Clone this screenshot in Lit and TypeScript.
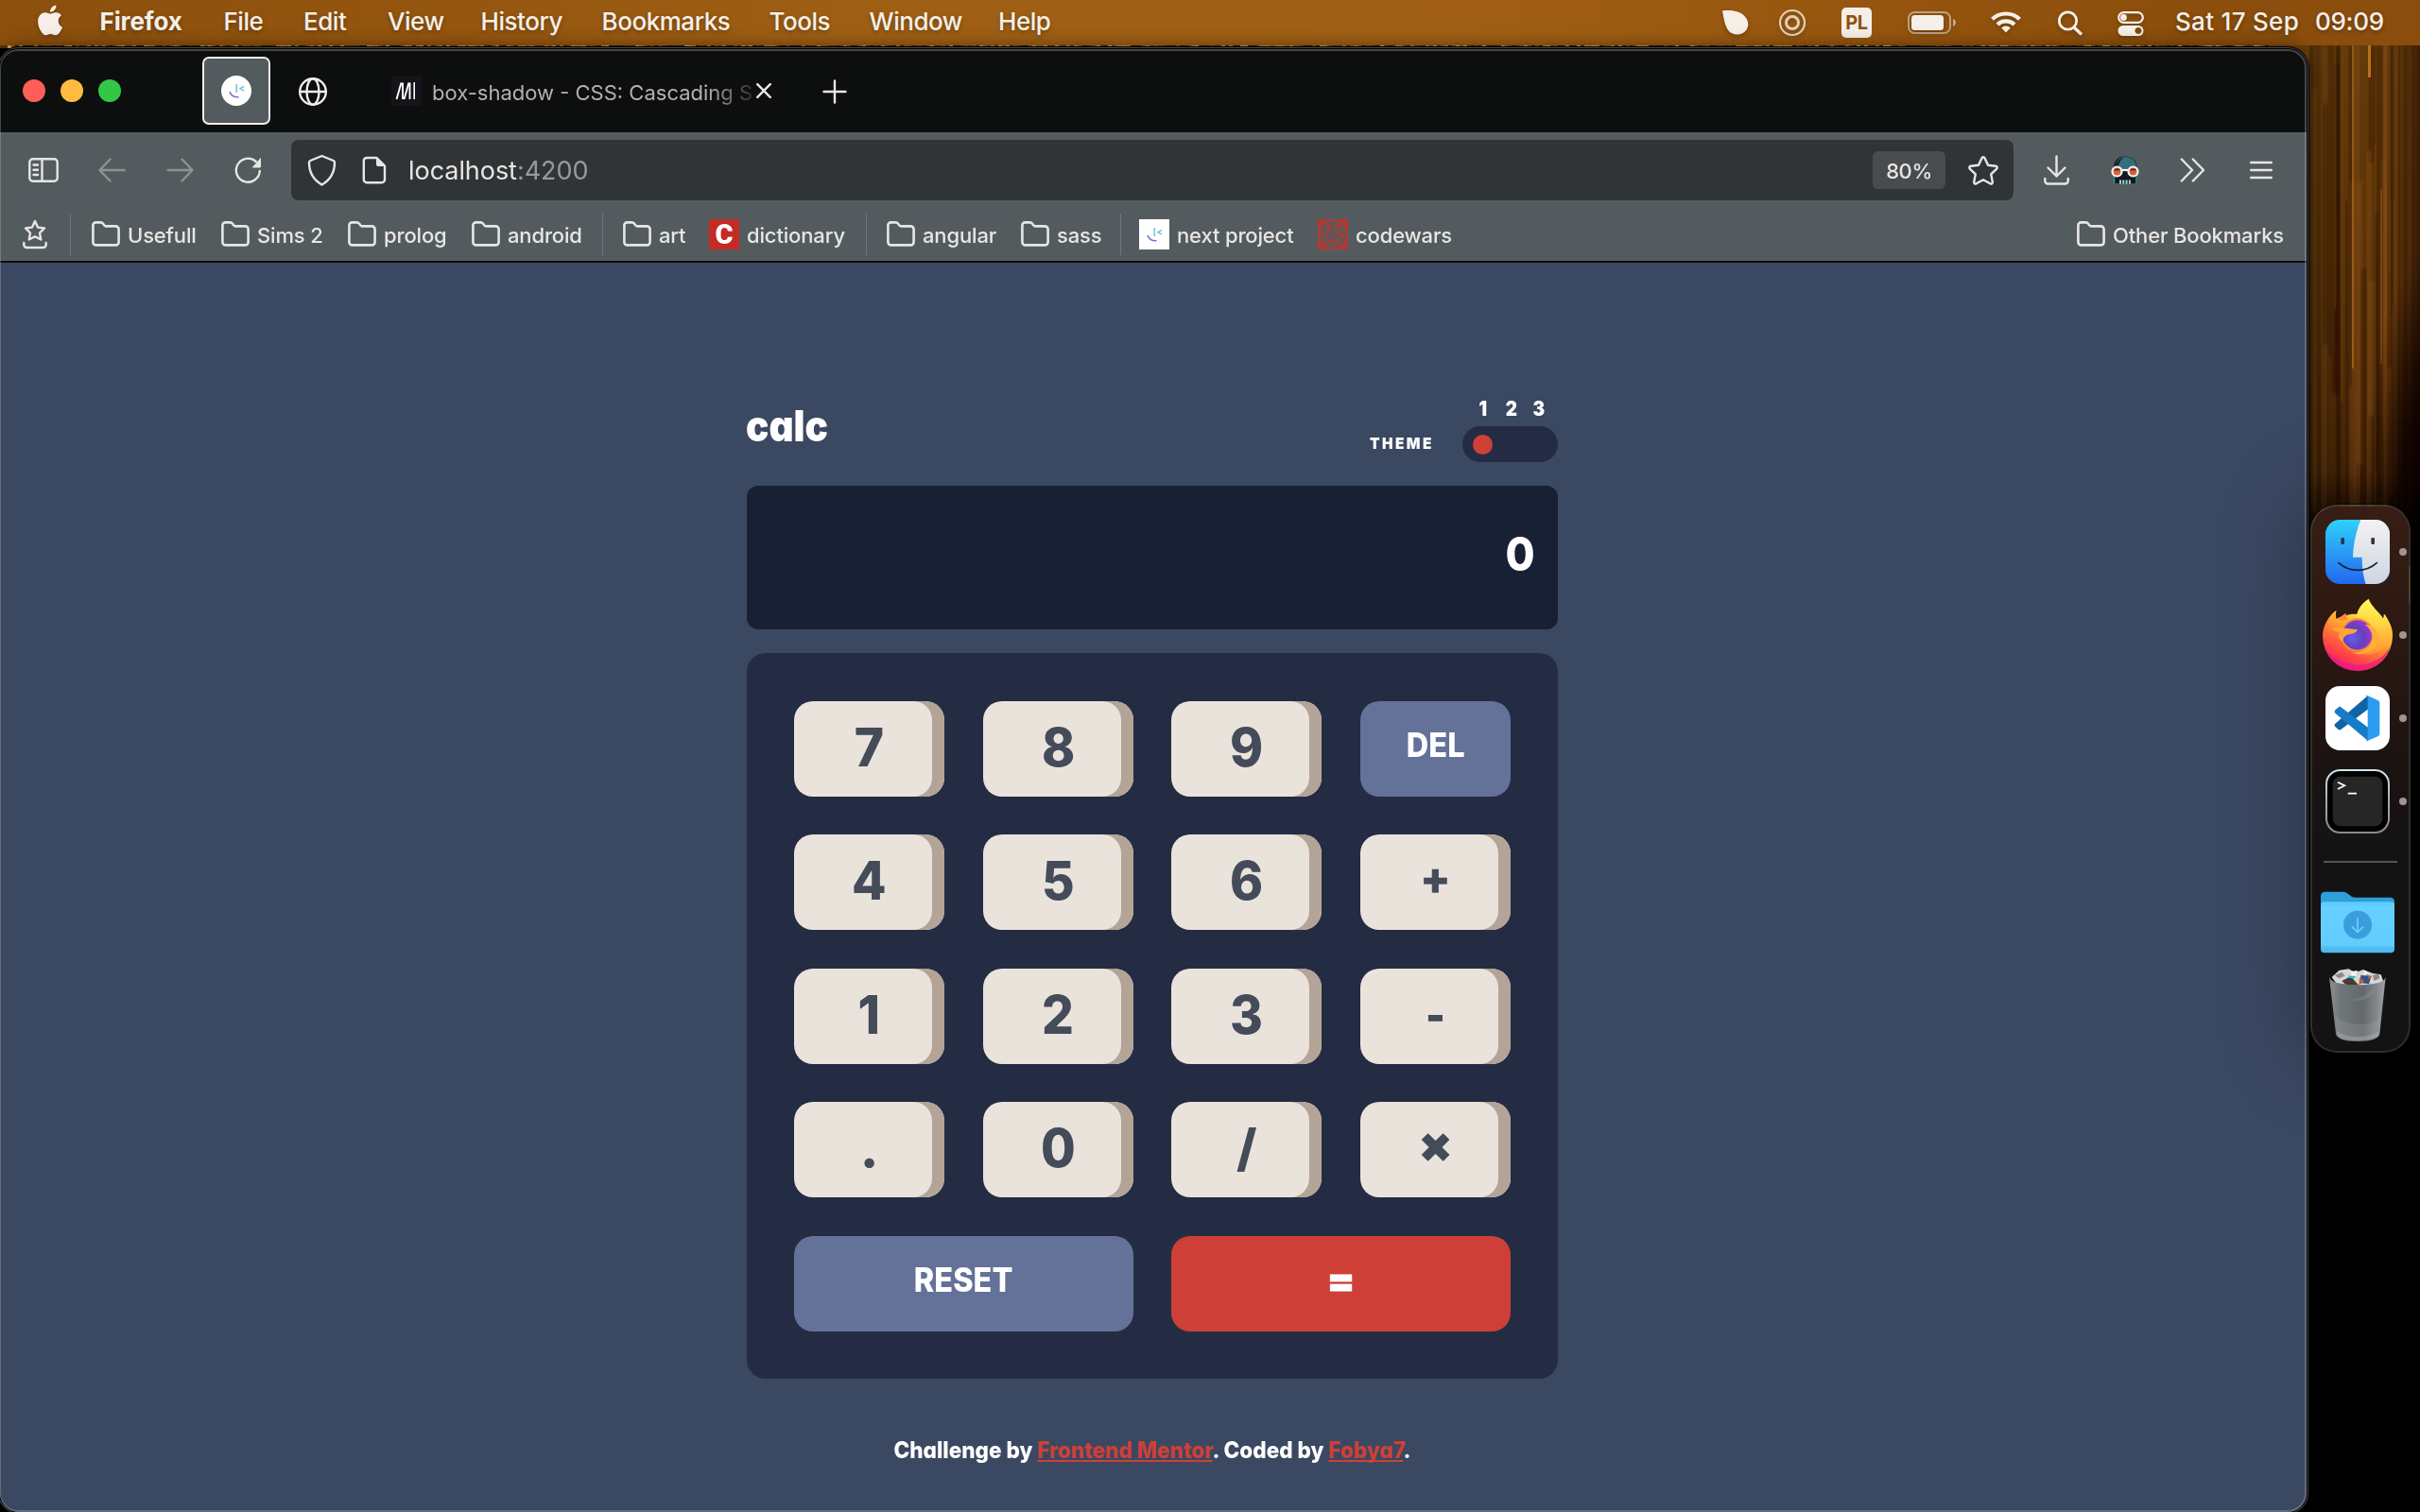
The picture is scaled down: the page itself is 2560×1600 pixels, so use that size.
import { LitElement, html, css, svg } from "lit";
import { customElement } from "lit/decorators.js";
import { classMap } from "lit/directives/class-map.js";

const folder = html`<svg class="folder" width="30" height="27" viewBox="0 0 30 27">
  <path d="M1.4 4.6a3 3 0 0 1 3-3.2h5.2c1 0 1.700.4 2.300 1.100l1.500 2c.5.6 1 .9 1.800.9h10a3.200 3.200 0 0 1 3.400 3.200v13.600a3.200 3.200 0 0 1-3.200 3.200H4.600a3.200 3.200 0 0 1-3.200-3.200z"/></svg>`;

const smile = svg`<path d="M9 17c1.200 4 4.500 6 9.500 5.800" stroke="#6a78c8" stroke-width="1.500" fill="none"/>
  <path d="M16.200 9v9" stroke="#6fc4dc" stroke-width="1.500"/>
  <path d="M24 11.500l-4 2.200 4 2.400" stroke="#6fc4dc" stroke-width="1.500" fill="none"/>`;

const rand = (i: number) => {
  const v = Math.sin(i * 127.1 + 11.7) * 43758.5453;
  return v - Math.floor(v);
};

@customElement("desktop-wallpaper")
class DesktopWallpaper extends LitElement {
  static styles = css`
    :host { display: block; width: 2560px; height: 1600px; background: #000; }
    svg { display: block; }
  `;
  render() {
    const tints = ["#8a5410", "#c98a2c", "#3a1d04", "#d8a850", "#5e3407", "#241002"];
    const fleck = Array.from({ length: 610 }, (_, i) =>
      svg`<rect x=${i * 4} y="48" width="4" height="3" fill=${tints[Math.floor(rand(i) * 6)]}/>`);
    const streaks = Array.from({ length: 40 }, (_, i) => {
      const x = 2443 + rand(i + 900) * 112;
      const y = rand(i + 50) > 0.35 ? 48 : 48 + rand(i + 70) * 240;
      const light = rand(i + 300) > 0.4;
      return svg`<rect x=${x} y=${y} width=${1.5 + rand(i + 500) * 6} height=${220 + rand(i + 200) * 380}
        fill=${light ? "#9a5a16" : "#1c0c00"} opacity=${light ? 0.26 : 0.24}/>`;
    });
    return html`<svg width="2560" height="1600" viewBox="0 0 2560 1600">
      <defs>
        <filter id="soft"><feGaussianBlur stdDeviation=".7 1.5"/></filter>
        <linearGradient id="v" x1="0" y1="0" x2="0" y2="1">
          <stop offset="0" stop-color="#6b3f0b"/><stop offset=".45" stop-color="#5c3409"/>
          <stop offset=".8" stop-color="#4a2807"/><stop offset="1" stop-color="#2e1603"/>
        </linearGradient>
        <linearGradient id="h" x1="0" y1="0" x2="1" y2="0">
          <stop offset="0" stop-color="#000" stop-opacity=".3"/><stop offset=".25" stop-color="#000" stop-opacity=".05"/>
          <stop offset=".7" stop-color="#000" stop-opacity=".05"/><stop offset="1" stop-color="#180400" stop-opacity=".55"/>
        </linearGradient>
        <linearGradient id="f" x1="0" y1="0" x2="0" y2="1">
          <stop offset="0" stop-color="#000" stop-opacity="0"/><stop offset="1" stop-color="#000"/>
        </linearGradient>
        <radialGradient id="c" gradientUnits="userSpaceOnUse" cx="0" cy="0" r="1" gradientTransform="translate(2575 560) scale(75 300)">
          <stop offset="0" stop-color="#060000"/><stop offset=".5" stop-color="#0a0000" stop-opacity=".8"/><stop offset="1" stop-color="#100200" stop-opacity="0"/>
        </radialGradient>
      </defs>
      ${fleck}
      <rect x="2400" y="48" width="160" height="552" fill="url(#v)"/>
      <g filter="url(#soft)">${streaks}</g>
      <rect x="2488" y="48" width="2" height="342" fill="#b9701f" opacity=".7"/>
      <rect x="2505" y="48" width="3" height="34" fill="#cf7c22" opacity=".9"/>
      <rect x="2518" y="200" width="2" height="185" fill="#95561a" opacity=".6"/>
      <rect x="2533" y="60" width="3" height="450" fill="#7d4711" opacity=".5"/>
      <rect x="2443" y="48" width="117" height="552" fill="url(#h)"/>
      <rect x="2443" y="48" width="117" height="552" fill="url(#c)"/>
      <rect x="2443" y="500" width="117" height="100" fill="url(#f)"/>
    </svg>`;
  }
}

@customElement("menu-bar")
class MenuBar extends LitElement {
  static styles = css`
    :host { display: block; }
    .bar {
      display: flex; height: 48px; color: #f5efe8; font: 500 26px/45px Inter, "Liberation Sans", sans-serif;
      background: linear-gradient(90deg, #8c4f0d 0, #95560f 20%, #9e5f14 35%, #a05f14 60%, #98570f 75%, #8b4e0c 90%, #8a4d0d);
      text-shadow: 0 2px 4px rgba(0, 0, 0, .3); white-space: nowrap; letter-spacing: -.45px;
    }
    .menus { display: grid; grid-template-columns: 66px 131px 84.5px 89px 98.5px 128px 177px 106px 136.500px 80px; padding-left: 39.500px; }
    .app { font-weight: 700; letter-spacing: -.1px; }
    .status { display: grid; margin-left: auto; width: 742px; grid-template-columns: 64px 66px 70px 88px 71px 63px 61px 148px auto; }
    svg { display: block; filter: drop-shadow(0 2px 2px rgba(0, 0, 0, .25)); }
    .day { letter-spacing: .3px; }
    .time { letter-spacing: -.3px; }
    .lang { display: block; margin-top: 8px; width: 32px; height: 32px; border-radius: 5px; background: #f5efe8; color: #8f520e; font: 700 20px/32px Inter, sans-serif; text-align: center; text-shadow: none; letter-spacing: -.5px; }
  `;
  render() {
    return html`<div class="bar">
      <div class="menus">
        <svg width="30" height="48" viewBox="0 0 30 48"><path transform="translate(-2.800 5.500) scale(1.320)" fill="#f5efe8" d="M12.152 6.896c-.948 0-2.415-1.078-3.960-1.040-2.040.027-3.910 1.183-4.961 3.014-2.117 3.675-.546 9.103 1.519 12.090 1.013 1.454 2.208 3.090 3.792 3.039 1.520-.065 2.090-.987 3.935-.987 1.831 0 2.350.987 3.960.948 1.637-.026 2.676-1.480 3.676-2.948 1.156-1.688 1.636-3.325 1.662-3.415-.039-.013-3.182-1.221-3.220-4.857-.026-3.040 2.480-4.494 2.597-4.559-1.429-2.090-3.623-2.324-4.390-2.376-2-.156-3.675 1.090-4.610 1.090zM15.530 3.830c.843-1.012 1.400-2.427 1.245-3.830-1.207.052-2.662.805-3.532 1.818-.780.896-1.454 2.338-1.273 3.714 1.338.104 2.715-.688 3.559-1.701"/></svg>
        <span class="app">Firefox</span>
        ${["File", "Edit", "View", "History", "Bookmarks", "Tools", "Window", "Help"].map((m) => html`<span>${m}</span>`)}
      </div>
      <div class="status">
        <svg width="34" height="48" viewBox="0 0 34 48"><path fill="#f5efe8" d="M4 11.500C12 10.500 21 11 27 16.500c6 6 5.500 14-.5 18-5 3.200-12 2.500-15.500-1.500C6.500 28 5.500 19 4 11.500z"/></svg>
        <svg width="30" height="48" viewBox="0 0 30 48" fill="none" stroke="#f5efe8"><g opacity=".8"><circle cx="14" cy="24" r="13" stroke-width="2.200"/><circle cx="14" cy="24" r="6.500" stroke-width="3"/></g></svg>
        <span class="lang">PL</span>
        <svg width="54" height="48" viewBox="0 0 54 48"><rect x="1" y="13" width="44" height="22" rx="6.500" fill="none" stroke="#f5efe8" stroke-width="2" opacity=".5"/><rect x="4" y="16" width="34" height="16" rx="3.500" fill="#f5efe8"/><path d="M48 20v8c2-.6 3-2.200 3-4s-1-3.400-3-4z" fill="#f5efe8" opacity=".55"/></svg>
        <svg width="34" height="48" viewBox="0 0 34 48" fill="none" stroke="#f5efe8" stroke-width="4.200"><path d="M1.500 20.300a21 21 0 0 1 29 0"/><path d="M7 26a13 13 0 0 1 18 0"/><path d="M16 34.500l-4.800-5a7 7 0 0 1 9.600 0z" fill="#f5efe8" stroke="none"/></svg>
        <svg width="30" height="48" viewBox="0 0 30 48" fill="none" stroke="#f5efe8" stroke-width="2.800"><circle cx="10.500" cy="22" r="9.200"/><path d="M17 29l8 7.500" stroke-width="3.400"/></svg>
        <svg width="30" height="48" viewBox="0 0 30 48"><rect x="1.200" y="13.200" width="25.600" height="10.600" rx="5.300" fill="none" stroke="#f5efe8" stroke-width="2.200"/><circle cx="6.500" cy="18.500" r="3.400" fill="#f5efe8"/><path fill="#f5efe8" fill-rule="evenodd" d="M6 27h16a5.500 5.500 0 0 1 0 11H6a5.500 5.500 0 0 1 0-11zm16 2a3.500 3.500 0 1 0 .01 0z"/></svg>
        <span class="day">Sat 17 Sep</span><span class="time">09:09</span>
      </div>
    </div>`;
  }
}

@customElement("browser-chrome")
class BrowserChrome extends LitElement {
  static styles = css`
    :host { display: block; font-family: Inter, "Liberation Sans", sans-serif; color: #e8e6e3; white-space: nowrap; }
    svg { display: block; flex: none; }
    .tabs { display: flex; align-items: center; height: 88px; background: #0d0f0e; padding-left: 24px; }
    .lights { display: flex; gap: 16px; margin-right: 86px; }
    .light { width: 24px; height: 24px; border-radius: 50%; }
    .close { background: #ff5f57; } .min { background: #febb3f; } .max { background: #33c748; }
    .pinned { box-sizing: border-box; width: 72px; height: 72px; border: 2px solid #f0eeeb; border-radius: 7px; background: #535b5e; display: grid; place-items: center; margin-right: 29px; }
    .globe { margin: 2px 67px 0 0; }
    .mdn { margin-right: 11px; }
    .title { width: 342px; height: 36px; font-size: 22px; line-height: 40px; color: #b3b1ae; overflow: hidden; -webkit-mask: linear-gradient(90deg, #000 85%, rgba(0, 0, 0, .15)); mask: linear-gradient(90deg, #000 85%, rgba(0, 0, 0, .15)); }
    .x { margin-left: 1px; } .plus { margin: 2px 0 0 54px; }
    .tools { display: grid; align-items: center; height: 80px; background: #535b5e; padding-left: 30px; grid-template-columns: 74px 72px 72px 60px 1854px 70px 74px 74px auto; }
    .line { fill: none; stroke: #e8e6e3; stroke-width: 2.400; stroke-linecap: round; stroke-linejoin: round; }
    .dim { opacity: .4; }
    .url { width: 1822px; height: 64px; border-radius: 8px; background: #313436; display: flex; align-items: center; box-sizing: border-box; padding-left: 17px; }
    .doc { margin: 0 22px 0 27px; }
    .host { font-size: 27px; line-height: 66px; letter-spacing: -.05px; padding: 2px 0 0 1px; }
    .port { color: #98999a; }
    .zoom { margin-left: auto; width: 77px; height: 40px; border-radius: 6px; background: #494c4f; font-size: 22px; font-weight: 500; line-height: 43px; text-align: center; letter-spacing: -.4px; }
    .fav { margin: 0 15px 0 23px; }
    .marks { display: grid; align-items: center; height: 56px; background: #535b5e; padding-left: 24px; border-bottom: 2px solid #0c0d0d; grid-template-columns: 50px 23px 137px 134px 131px 137.500px 22.500px 91px 165.500px 22.500px 142px 104.500px 20.500px 189px 803px auto; }
    .sep { width: 1px; height: 44px; background: #70777a; }
    .mark { display: flex; align-items: center; gap: 8px; font-size: 22px; font-weight: 500; line-height: 28px; letter-spacing: -.15px; }
    .mark span { padding-top: 2px; }
    .folder { fill: none; stroke: #e8e6e3; stroke-width: 2.600; margin-top: -2px; }
    .c { width: 32px; height: 32px; background: #c42b24; color: #fff; font: 900 29px/32px Roboto, sans-serif; text-align: center; }
    .mark .c { padding: 0; }
  `;
  private mark(label: string, icon = folder) {
    return html`<div class="mark">${icon}<span>${label}</span></div>`;
  }
  render() {
    const sep = html`<div class="sep"></div>`;
    const next = html`<svg width="32" height="32" viewBox="0 0 32 32"><rect width="32" height="32" fill="#fff"/>${smile}</svg>`;
    const blades = [0, 60, 120, 180, 240, 300].map((a) =>
      svg`<path transform=${`rotate(${a} 16 16)`} d="M16 13.500c-1.500-3.500.5-8 5.500-9.300M13.500 12.500c-1-3.500 1-7.500 4.500-9.300"/>`);
    const wars = html`<svg width="32" height="32" viewBox="0 0 32 32"><rect width="32" height="32" fill="#ad3b33"/><g fill="none" stroke="#535b5e" stroke-width="1.800"><circle cx="16" cy="16" r="12.800"/>${blades}<circle cx="16" cy="16" r="2.500"/></g></svg>`;
    return html`
      <div class="tabs">
        <div class="lights"><div class="light close"></div><div class="light min"></div><div class="light max"></div></div>
        <div class="pinned"><svg width="32" height="32" viewBox="0 0 32 32"><circle cx="16" cy="16" r="16" fill="#fff"/>${smile}</svg></div>
        <svg class="globe" width="32" height="32" viewBox="0 0 32 32" fill="none" stroke="#f0eeeb" stroke-width="2.400"><circle cx="16" cy="16" r="13.800"/><ellipse cx="16" cy="16" rx="6.500" ry="13.800"/><path d="M2.500 16h27"/></svg>
        <svg class="mdn" width="32" height="32" viewBox="0 0 32 32"><rect width="32" height="32" fill="#15141a"/><path d="M5.500 25l5-17.500M12 7.500V25M13.500 25l5-17.500M19.500 7.500V25" stroke="#fff" stroke-width="1.900" fill="none"/><path d="M24.200 7v18" stroke="#fff" stroke-width="1.600"/></svg>
        <div class="title">box-shadow - CSS: Cascading S</div>
        <svg class="x" width="16" height="16" viewBox="0 0 16 16"><path class="line" stroke-width="2" d="M1.200 1.200l13.600 13.600M14.800 1.200L1.200 14.800"/></svg>
        <svg class="plus" width="26" height="26" viewBox="0 0 26 26"><path class="line" d="M13 1.500v23M1.500 13h23"/></svg>
      </div>
      <div class="tools">
        <svg width="32" height="26" viewBox="0 0 32 26"><g class="line"><rect x="1.300" y="1.300" width="29.400" height="23.400" rx="3.500"/><path d="M14.500 1.500v23M5.500 7.500h4.500M5.500 12.700h4.500M5.500 18h4.500"/></g></svg>
        <svg class="dim" width="29" height="26" viewBox="0 0 29 26"><path class="line" d="M12.500 1.500L1.500 13l11 11.500M1.500 13h26"/></svg>
        <svg class="dim" width="29" height="26" viewBox="0 0 29 26"><path class="line" d="M16.500 1.500L27.500 13l-11 11.500M27.500 13h-26"/></svg>
        <svg width="30" height="30" viewBox="0 0 30 30"><path class="line" stroke-width="2.600" d="M26.800 16a12.500 12.500 0 1 1-4-10"/><path fill="#e8e6e3" d="M28 1.800v9.700a1 1 0 0 1-1 1h-8.500z"/></svg>
        <div class="url">
          <svg width="31" height="34" viewBox="0 0 31 34"><path class="line" d="M15.500 2l12.200 5c.9.4 1.300 1 1.300 2 0 10.500-4 18-13.500 23.500C6 27 2 19.500 2 9c0-1 .4-1.600 1.300-2z"/></svg>
          <svg class="doc" width="26" height="30" viewBox="0 0 26 30"><path class="line" d="M5 2h10.500l8.500 8.500V25a3.200 3.200 0 0 1-3.200 3.200H5A3.200 3.200 0 0 1 1.800 25V5.200A3.200 3.200 0 0 1 5 2z"/><path d="M15 2v7a2 2 0 0 0 2 2h7z" fill="#e8e6e3"/></svg>
          <div class="host">localhost<span class="port">:4200</span></div>
          <div class="zoom">80%</div>
          <svg class="fav" width="34" height="34" viewBox="0 0 34 34"><path class="line" d="M17 3.200c.7 0 1.200.4 1.500 1l3.500 7.600 8.200 1c1.500.2 2 1.700 1 2.800l-6 5.700 1.600 8.300c.2 1.400-1.100 2.300-2.400 1.700L17 27.200l-7.400 4.100c-1.300.6-2.600-.3-2.400-1.700l1.600-8.300-6-5.700c-1-1.100-.5-2.600 1-2.800l8.200-1 3.500-7.600c.3-.6.8-1 1.500-1z"/></svg>
        </div>
        <svg width="28" height="32" viewBox="0 0 28 32"><g class="line"><path d="M13.500 1.500v21M4.500 13.500l9 9 9-9M1.300 25v2.500a3 3 0 0 0 3 3h18.400a3 3 0 0 0 3-3V25"/></g></svg>
        <svg width="32" height="32" viewBox="0 0 32 32"><path d="M4 30V13C4 6 9 1.500 16 1.500S28.500 6 28.500 13v17z" fill="#15191f"/><path d="M5 14C6 6 10.500 2 16.500 2c6.500 0 11.500 4.500 11.500 11v3H8c0-5 2-9.500 6-13C9 5 6 9 5 14z" fill="#336e7d"/><path d="M4.500 20v10M28 20v10" stroke="#2a93a5" stroke-width="1.500"/><path d="M10 28.500h13" stroke="#9fd8e2" stroke-width="4" stroke-dasharray="2 1.300"/><g fill="#d9603f" stroke="#fff3ee" stroke-width="2.200"><circle cx="7.500" cy="17.500" r="5"/><circle cx="24.500" cy="17.500" r="5"/><path d="M12 16h8" fill="none"/></g><path d="M4 16.500a3.800 3.800 0 0 1 7 0zM21 16.500a3.800 3.800 0 0 1 7 0z" fill="#54302c"/></svg>
        <svg width="26" height="26" viewBox="0 0 26 26"><path class="line" d="M1.800 1.500L13 13 1.800 24.500M13.800 1.500L25 13 13.800 24.500"/></svg>
        <svg width="24" height="20" viewBox="0 0 24 20"><path class="line" d="M1.200 2h21.600M1.200 10h21.600M1.200 18h21.600"/></svg>
      </div>
      <div class="marks">
        <svg width="26" height="32" viewBox="0 0 26 32"><g class="line"><path d="M13 2l3 6.600 7 .9-5 5 1.200 7L13 18.300l-6.200 3.200L8 14.500l-5-5 7-.9z"/><path d="M1.300 25v2a3 3 0 0 0 3 3h17.400a3 3 0 0 0 3-3v-2"/></g></svg>
        ${sep}${["Usefull", "Sims 2", "prolog", "android"].map((t) => this.mark(t))}
        ${sep}${this.mark("art")}${this.mark("dictionary", html`<span class="c">C</span>`)}
        ${sep}${this.mark("angular")}${this.mark("sass")}
        ${sep}${this.mark("next project", next)}${this.mark("codewars", wars)}
        ${this.mark("Other Bookmarks")}
      </div>`;
  }
}

interface Key { label: string; kind: string; }
const KEYS: Key[] = [
  ...["7", "8", "9"].map((label) => ({ label, kind: "num" })), { label: "DEL", kind: "word" },
  ...["4", "5", "6"].map((label) => ({ label, kind: "num" })), { label: "+", kind: "plus" },
  ...["1", "2", "3"].map((label) => ({ label, kind: "num" })), { label: "-", kind: "minus" },
  { label: ".", kind: "dot" }, { label: "0", kind: "num" }, { label: "/", kind: "slash" }, { label: "×", kind: "times" },
  { label: "RESET", kind: "word wide" }, { label: "=", kind: "equals wide" },
];

@customElement("calc-page")
class CalcPage extends LitElement {
  static styles = css`
    :host { display: block; background: #3b4862; color: #fff; font-family: Inter, "Liberation Sans", sans-serif; font-feature-settings: "cv11"; }
    .page { width: 858px; margin-left: 790px; padding-top: 140px; }
    header { display: flex; height: 71px; margin-bottom: 25px; }
    .logo { font-size: 45px; font-weight: 900; line-height: 44px; margin-top: 11px; margin-left: -1px; transform: scaleX(.9); transform-origin: 0 50%; width: 93px; }
    .theme { margin: 31px 30px 0 auto; font-size: 16.500px; line-height: 40px; font-weight: 900; letter-spacing: 2.600px; transform: scaleX(.93); transform-origin: 100% 50%; }
    .nums { display: grid; grid-template-columns: repeat(3, 29.500px); padding-left: 7px; font-size: 21px; font-weight: 900; line-height: 29px; text-align: center; }
    .nums span { transform: scaleX(.9); }
    .toggle { box-sizing: border-box; margin-top: 4px; width: 101px; height: 38px; border-radius: 19px; background: #242c44; padding: 9px 11px 0; }
    .knob { width: 21px; height: 21px; border-radius: 50%; background: #ce4037; }
    .display { box-sizing: border-box; height: 152px; border-radius: 12px; background: #182034; padding-right: 24px; text-align: right; font-size: 50px; font-weight: 800; line-height: 144px; }
    .display span { display: inline-block; transform: scaleX(.9); transform-origin: 100% 50%; }
    .pad { margin-top: 25px; height: 768px; box-sizing: border-box; padding: 50.900px 50px 50px; border-radius: 20px; background: #242c44; display: grid; grid-template-columns: repeat(4, 159px); justify-content: space-between; grid-template-rows: repeat(5, 101px); row-gap: 40.500px; }
    .key { border-radius: 20px; background: #eae3dc; color: #444b59; box-shadow: inset -13px 0 #b3a497; text-align: center; font-size: 56px; font-weight: 800; line-height: 98px; overflow: hidden; }
    .key span { display: inline-block; }
    .num span { transform: scaleX(.95); }
    .wide { grid-column: span 2; }
    .word, .equals { color: #fff; box-shadow: none; }
    .word { background: #647198; font-size: 35.500px; line-height: 94px; }
    .word span { transform: scaleX(.915); }
    .equals { background: #ce4037; font-size: 42px; font-weight: 900; line-height: 94px; -webkit-text-stroke: 1.200px #fff; }
    .plus { font-size: 47px; line-height: 92px; -webkit-text-stroke: .6px #444b59; }
    .minus { font-size: 40px; line-height: 100px; -webkit-text-stroke: 1.600px #444b59; }
    .times { font-size: 50px; font-weight: 900; line-height: 90px; -webkit-text-stroke: 1.200px #444b59; }
    .slash { font-size: 54px; } .dot { font-size: 56px; }
    footer { margin-top: 56px; text-align: center; font-size: 24px; line-height: 40px; font-weight: 800; }
    footer span { display: inline-block; white-space: nowrap; transform: scaleX(.94); }
    a { color: #ce4037; text-decoration: underline; text-decoration-thickness: 2px; text-underline-offset: 2px; text-decoration-skip-ink: none; }
  `;
  render() {
    return html`<div class="page">
      <header>
        <div class="logo">calc</div><div class="theme">THEME</div>
        <div><div class="nums"><span>1</span><span>2</span><span>3</span></div><div class="toggle"><div class="knob"></div></div></div>
      </header>
      <div class="display"><span>0</span></div>
      <div class="pad">${KEYS.map((k) => html`<div class=${classMap(Object.fromEntries(["key", ...k.kind.split(" ")].map((c) => [c, true])))}><span>${k.label}</span></div>`)}</div>
      <footer><span>Challenge by <a>Frontend Mentor</a>. Coded by <a>Fobya7</a>.</span></footer>
    </div>`;
  }
}

@customElement("app-dock")
class AppDock extends LitElement {
  static styles = css`
    :host { display: block; }
    .dock { box-sizing: border-box; width: 106px; height: 580px; border: 2px solid rgba(255, 255, 255, .18); border-radius: 28px; padding: 4px 0; background: linear-gradient(#381e14, #2a1811 25%, #1a1312 50%, #131313 65%); background-clip: padding-box; box-shadow: 0 0 90px rgba(0, 0, 0, .35), 0 0 0 1px rgba(0, 0, 0, .6); }
    .slot { height: 88px; display: grid; grid-template-columns: 92px 8px; align-items: center; justify-items: center; }
    .icon { padding-left: 4px; }
    .run { width: 8px; height: 8px; border-radius: 50%; background: #a19390; }
    .rule { height: 2px; margin: 19px 12px; width: 78px; background: #555; }
    svg { display: block; }
  `;
  private item(icon: unknown, running: boolean) {
    return html`<div class="slot"><div class="icon">${icon}</div>${running ? html`<div class="run"></div>` : ""}</div>`;
  }
  render() {
    const finder = html`<svg width="68" height="68" viewBox="120 150 204 204">
      <defs><linearGradient id="fb" x1="0" y1="0" x2="0" y2="1"><stop offset="0" stop-color="#2fd0fb"/><stop offset="1" stop-color="#2268ee"/></linearGradient>
      <linearGradient id="fw" x1="0" y1="0" x2="0" y2="1"><stop offset="0" stop-color="#f3f2f3"/><stop offset="1" stop-color="#ccd6e2"/></linearGradient>
      <clipPath id="fc"><rect x="120" y="150" width="204" height="204" rx="46"/></clipPath></defs>
      <g clip-path="url(#fc)"><rect x="120" y="150" width="204" height="204" fill="url(#fb)"/>
      <path d="M232 150c-16 40-24 80-25 119h29c0 34 4 60 12 85h80V150z" fill="url(#fw)"/></g>
      <rect x="169" y="207" width="11" height="21" rx="4" fill="#22364d"/><rect x="265" y="207" width="11" height="21" rx="4" fill="#333"/>
      <path d="M162 287c34 31 86 31 121 0" fill="none" stroke="#14202e" stroke-width="5" stroke-linecap="round"/></svg>`;
    const firefox = html`<svg width="76" height="78" viewBox="108 396 228 234">
      <defs><linearGradient id="a" x1=".8" y1=".05" x2=".25" y2="1"><stop offset="0" stop-color="#fff35a"/><stop offset=".3" stop-color="#ffb836"/><stop offset=".55" stop-color="#ff7139"/><stop offset=".8" stop-color="#ff3a4c"/><stop offset="1" stop-color="#e0128a"/></linearGradient>
      <radialGradient id="p" cx=".35" cy=".6" r=".75"><stop offset="0" stop-color="#6a5cf0"/><stop offset=".5" stop-color="#6340b8"/><stop offset="1" stop-color="#b135dd"/></radialGradient>
      <linearGradient id="y" x1=".5" y1="0" x2=".5" y2="1"><stop offset="0" stop-color="#fff95c"/><stop offset=".4" stop-color="#ffd944"/><stop offset="1" stop-color="#ff9034"/></linearGradient></defs>
      <path d="M155 434c-3 8-3 18 0 28 8-6 18-10 27-10 30-12 52-4 66 8 30 4 50 10 55 0 3-5 2-10 2-14 14 14 28 42 28 70a111 111 0 0 1-222 0c0-34 22-68 44-82z" fill="url(#a)"/>
      <path d="M257 398c-28 18-40 42-38 66 30 0 58 30 58 60 0 24-14 42-34 52 40 0 78-24 88-60 4-20-6-42-16-52-2-10-4-14-7-18-1 8-2 12-4 15-14-22-38-38-47-63z" fill="url(#y)"/>
      <path d="M186 443c-14 6-22 16-24 24l32-2c-8-6-10-14-8-22z" fill="#ff8a3a"/>
      <circle cx="221" cy="513" r="53" fill="#ff8a36"/>
      <circle cx="221" cy="513" r="47" fill="url(#p)"/>
      <path d="M245 480c22 0 43 16 44 42 0 28-24 50-58 52-10 0-20-2-28-6 24 2 50-8 60-26 12-22 4-48-18-62z" fill="#ffae38"/>
      <path d="M140 493c12-6 26-5 38-2 16 0 30 4 44 4-3 12-18 14-28 16-14 4-18 12-20 22-14-8-14-18-8-28-10-2-20-6-26-12z" fill="#ffa436"/>
      <path d="M116 545c10 30 50 62 106 62 50 0 90-26 104-62-12 50-54 81-104 81S124 592 116 545z" fill="#ec1a80" opacity=".75"/>
    </svg>`;
    const code = html`<svg width="68" height="68" viewBox="120 678 204 204"><rect x="120" y="678" width="204" height="204" rx="46" fill="#fff"/>
      <path d="M255 708l2 42-88 66c-3 2-6 2-9-1l-9-8c-3-3-3-7 0-10z" fill="#0e64a6"/>
      <path d="M255 852l2-41-88-66c-3-2-6-2-9 1l-9 8c-3 3-3 7 0 10z" fill="#187bc9"/>
      <path d="M253 708l33 15c4 2 6 5 6 9v97c0 4-2 7-6 9l-33 14c-3 1-7 0-9-2 5 3 10 0 10-6V716c0-6-5-9-10-6 2-2 6-3 9-2z" fill="#2b9df1"/></svg>`;
    const term = html`<svg width="68" height="68" viewBox="120 942 204 204"><defs><linearGradient id="t" x1="0" y1="0" x2="0" y2="1"><stop offset="0" stop-color="#cfe6ee"/><stop offset=".5" stop-color="#a6aaac"/><stop offset="1" stop-color="#8b8b8b"/></linearGradient></defs>
      <rect x="123" y="945" width="198" height="198" rx="44" fill="#000" stroke="url(#t)" stroke-width="6"/><rect x="143" y="965" width="158" height="158" rx="24" fill="#262626"/>
      <path d="M159 983l22 11-22 11M191 1019h28" fill="none" stroke="#fff" stroke-width="5"/></svg>`;
    const downloads = html`<svg width="78" height="66" viewBox="105 250 234 198"><defs><linearGradient id="d" x1="0" y1="0" x2="0" y2="1"><stop offset="0" stop-color="#5ccaf9"/><stop offset=".1" stop-color="#66d0ff"/><stop offset=".85" stop-color="#62cdfd"/><stop offset="1" stop-color="#46b2e8"/></linearGradient></defs>
      <path d="M105 300v-34c0-9 5-14 14-14h56c7 0 11 2 16 6l10 8c4 3 7 4 12 4h112c9 0 14 5 14 14v30z" fill="#2d9fd9"/><rect x="105" y="284" width="234" height="162" rx="12" fill="url(#d)"/><path d="M107 427h230M107 434h230" stroke="#48b4e9" stroke-width="2"/>
      <circle cx="222" cy="357" r="45" fill="#3a9edd"/><path d="M222 335v44M204 363l18 17 18-17" fill="none" stroke="#6dd0fb" stroke-width="5"/></svg>`;
    const trash = html`<svg width="62" height="80" viewBox="129 488 186 240"><defs><linearGradient id="s" x1="0" y1="0" x2="1" y2="0"><stop offset="0" stop-color="#8b9092"/><stop offset=".2" stop-color="#70767a"/><stop offset=".6" stop-color="#63686a"/><stop offset=".85" stop-color="#84898b"/><stop offset="1" stop-color="#a0a4a6"/></linearGradient></defs>
      <path d="M140 518l24-22 30-4 20 12 26-10 30 12 26 4 8 22-26 16H162z" fill="#d8d6d4"/>
      <path d="M150 512l22-10 10 12-20 8zM270 512l18-4 4 14-18 8z" fill="#8c8a88"/><path d="M172 530l28-14 26 28h-40z" fill="#4a3934"/><path d="M188 518l28-4-6 10z" fill="#2cc07a"/><path d="M192 513l22 4-18 4z" fill="#18b7e8"/><path d="M232 512l34 2-8 26-28-4z" fill="#34508e"/><path d="M228 520l16 10-18 14zM250 508l16 10-8 6z" fill="#c8602f"/><path d="M200 500l22-3-6 18-14-4zM244 496l12 10-16 6z" fill="#f4f2f0"/>
      <path d="M132 518c4 10 12 14 24 18 40 10 92 10 132 0 12-4 20-8 23-18l-19 180c-2 14-22 24-70 24s-66-10-69-24z" fill="url(#s)"/>
      <path d="M190 590c30 0 60-14 84-36-4 34-40 44-84 36zM152 640c30 30 90 40 144 6l-4 46c-20 18-110 20-136 0z" fill="#b9bcbd" opacity=".18"/>
      <path d="M156 690c24 22 110 22 134 0l-2 12c-14 24-118 24-130 0z" fill="#b4b8ba" opacity=".5"/></svg>`;
    return html`<div class="dock">
      ${this.item(finder, true)}${this.item(firefox, true)}${this.item(code, true)}${this.item(term, true)}
      <div class="rule"></div>
      ${this.item(downloads, false)}${this.item(trash, false)}
    </div>`;
  }
}

@customElement("app-root")
class AppRoot extends LitElement {
  static styles = css`
    :host { display: block; position: relative; width: 2560px; height: 1600px; overflow: hidden; }
    .wall { position: absolute; top: 0; left: 0; }
    .desk { position: relative; display: flex; flex-direction: column; height: 1600px; }
    .row { display: flex; height: 1552px; }
    .window { position: relative; display: flex; flex-direction: column; width: 2440px; height: 1548px; margin-top: 4px; border-radius: 20px; overflow: hidden; box-shadow: 0 0 0 1px #000, 0 0 0 2px #454545, 0 0 0 3px #000, 0 0 20px rgba(0, 0, 0, .6); }
    .window::after { content: ""; position: absolute; inset: 0 0 0 -1px; border: 2px solid rgba(200, 200, 200, .3); border-radius: 20px; pointer-events: none; }
    .page { flex: 1; }
    .dock { margin: 486px 0 0 4px; position: relative; }
  `;
  render() {
    return html`
      <desktop-wallpaper class="wall"></desktop-wallpaper>
      <div class="desk">
        <menu-bar></menu-bar>
        <div class="row">
          <div class="window"><browser-chrome></browser-chrome><calc-page class="page"></calc-page></div>
          <app-dock class="dock"></app-dock>
        </div>
      </div>`;
  }
}
